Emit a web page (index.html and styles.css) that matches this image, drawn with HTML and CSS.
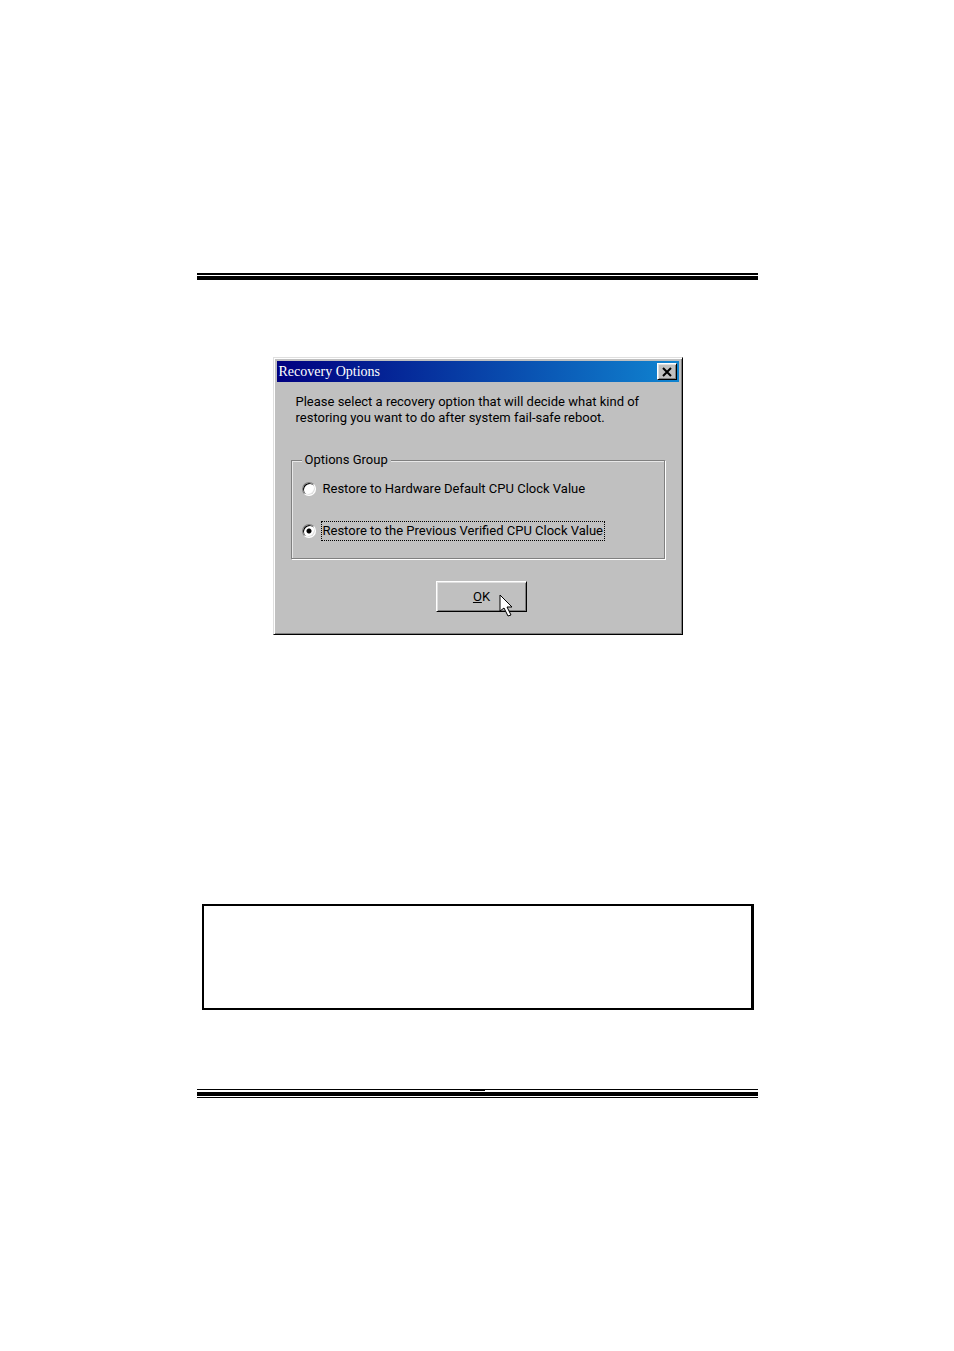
FILE: index.html
```html
<!DOCTYPE html>
<html lang="en">
<head>
  <meta charset="UTF-8" />
  <meta name="viewport" content="width=device-width, initial-scale=1" />
  <title>Recovery Options</title>
  <link rel="stylesheet" href="styles.css">
</head>
<body>
  <main class="page">
    <div class="rule rule-top"></div>

    <form class="dialog" role="dialog" aria-labelledby="dialogTitle">
      <div class="title-bar">
        <h1 id="dialogTitle">Recovery Options</h1>
        <button type="button" class="close-button" aria-label="Close">
          <svg width="12" height="10" viewBox="0 0 12 10">
            <path d="M2 1L10 9M10 1L2 9" stroke="#000" stroke-width="2" />
          </svg>
        </button>
      </div>

      <div class="dialog-body">
        <p class="message">Please select a recovery option that will decide what kind of<br>restoring you want to do after system fail-safe reboot.</p>

        <fieldset class="options">
          <legend>Options Group</legend>
          <div class="option">
            <input type="radio" name="restore" id="restoreDefault">
            <label for="restoreDefault">Restore to Hardware Default CPU Clock Value</label>
          </div>
          <div class="option">
            <input type="radio" name="restore" id="restorePrevious" checked>
            <label for="restorePrevious" class="focused">Restore to the Previous Verified CPU Clock Value</label>
          </div>
        </fieldset>

        <div class="actions">
          <div class="ok-wrap">
            <button type="button" class="ok-button"><u>O</u>K</button>
            <svg class="cursor" width="15" height="24" viewBox="0 0 15 24">
              <path d="M1 1V17L5 14L9 22L12 21L8 13H13Z" fill="#fff" stroke="#000" />
            </svg>
          </div>
        </div>
      </div>
    </form>

    <div class="note"></div>

    <div class="rule rule-bottom"><span class="tab"></span></div>
  </main>
</body>
</html>
```
FILE: styles.css
```css
* {
  box-sizing: border-box;
}

body {
  margin: 0;
  background: #fff;
  color: #000;
  font-family: Roboto, "Liberation Sans", sans-serif;
  font-size: 13px;
  line-height: 16px;
}

.page {
  padding: 273px 196px 253px 197px;
}

.rule {
  border-top: 2px solid #000;
  border-bottom: 4px solid #000;
  height: 7px;
}

/* dialog window */
.dialog {
  width: 100%;
  max-width: 410px;
  margin: 77px auto 0;
  background: #c0c0c0;
  border: 1px solid;
  border-color: #dfdfdf #000 #000 #dfdfdf;
  box-shadow: inset 1px 1px #fff, inset -1px -1px #808080;
  padding: 3px;
}

.title-bar {
  display: flex;
  align-items: center;
  justify-content: space-between;
  height: 21px;
  padding: 0 2px;
  background: linear-gradient(to right, #000080, #1084d0);
}

.title-bar h1 {
  margin: 0;
  color: #fff;
  font-family: "Liberation Serif", serif;
  font-size: 14px;
  font-weight: normal;
}

button {
  background: #c0c0c0;
  color: #000;
  font: inherit;
  padding: 0;
  border: 1px solid;
  border-color: #fff #000 #000 #fff;
  border-radius: 0;
  box-shadow: inset 1px 1px #dfdfdf, inset -1px -1px #808080;
}

.close-button {
  display: flex;
  align-items: center;
  justify-content: center;
  width: 20px;
  height: 17px;
}

.dialog-body {
  padding: 12px 14px 19px;
}

.message {
  margin: 0;
  padding: 0 5px;
}

/* option group */
.options {
  margin: 26px 0 0;
  padding: 11px 10px 17px;
  border: 1px solid #808080;
  box-shadow: 1px 1px #fff, inset 1px 1px #e8e8e8;
}

.options legend {
  padding: 0 3px;
  background: #c0c0c0;
}

.option {
  display: flex;
  align-items: center;
  gap: 5px;
  height: 20px;
}

.option + .option {
  margin-top: 22px;
}

.option label {
  padding: 1px;
  border: 1px dotted transparent;
}

.option label.focused {
  border-color: #000;
}

.option input {
  appearance: none;
  flex: none;
  width: 14px;
  height: 14px;
  margin: 0;
  border: 1px solid;
  border-color: #808080 #fff #fff #808080;
  border-radius: 50%;
  background: #fff;
  box-shadow: inset 1px 1px #000, inset -1px -1px #dfdfdf;
}

.option input:checked {
  background: radial-gradient(circle, #000 2px, #fff 3px);
}

.actions {
  display: flex;
  justify-content: center;
  margin-top: 22px;
  padding-left: 8px;
}

.ok-wrap {
  position: relative;
}

.ok-button {
  display: block;
  width: 91px;
  height: 31px;
}

.cursor {
  position: absolute;
  left: 63px;
  top: 13px;
}

/* empty note frame */
.note {
  margin: 269px 4px 0 5px;
  height: 106px;
  border: 2px solid #000;
  border-right-width: 3px;
}

.rule-bottom {
  position: relative;
  height: 9px;
  margin-top: 79px;
  border-width: 1px 0;
  background: linear-gradient(#000, #000) 0 2px / 100% 4px no-repeat;
}

.tab {
  position: absolute;
  top: -1px;
  left: calc(50% - 8px);
  width: 15px;
  height: 2px;
  background: #000;
}
```
